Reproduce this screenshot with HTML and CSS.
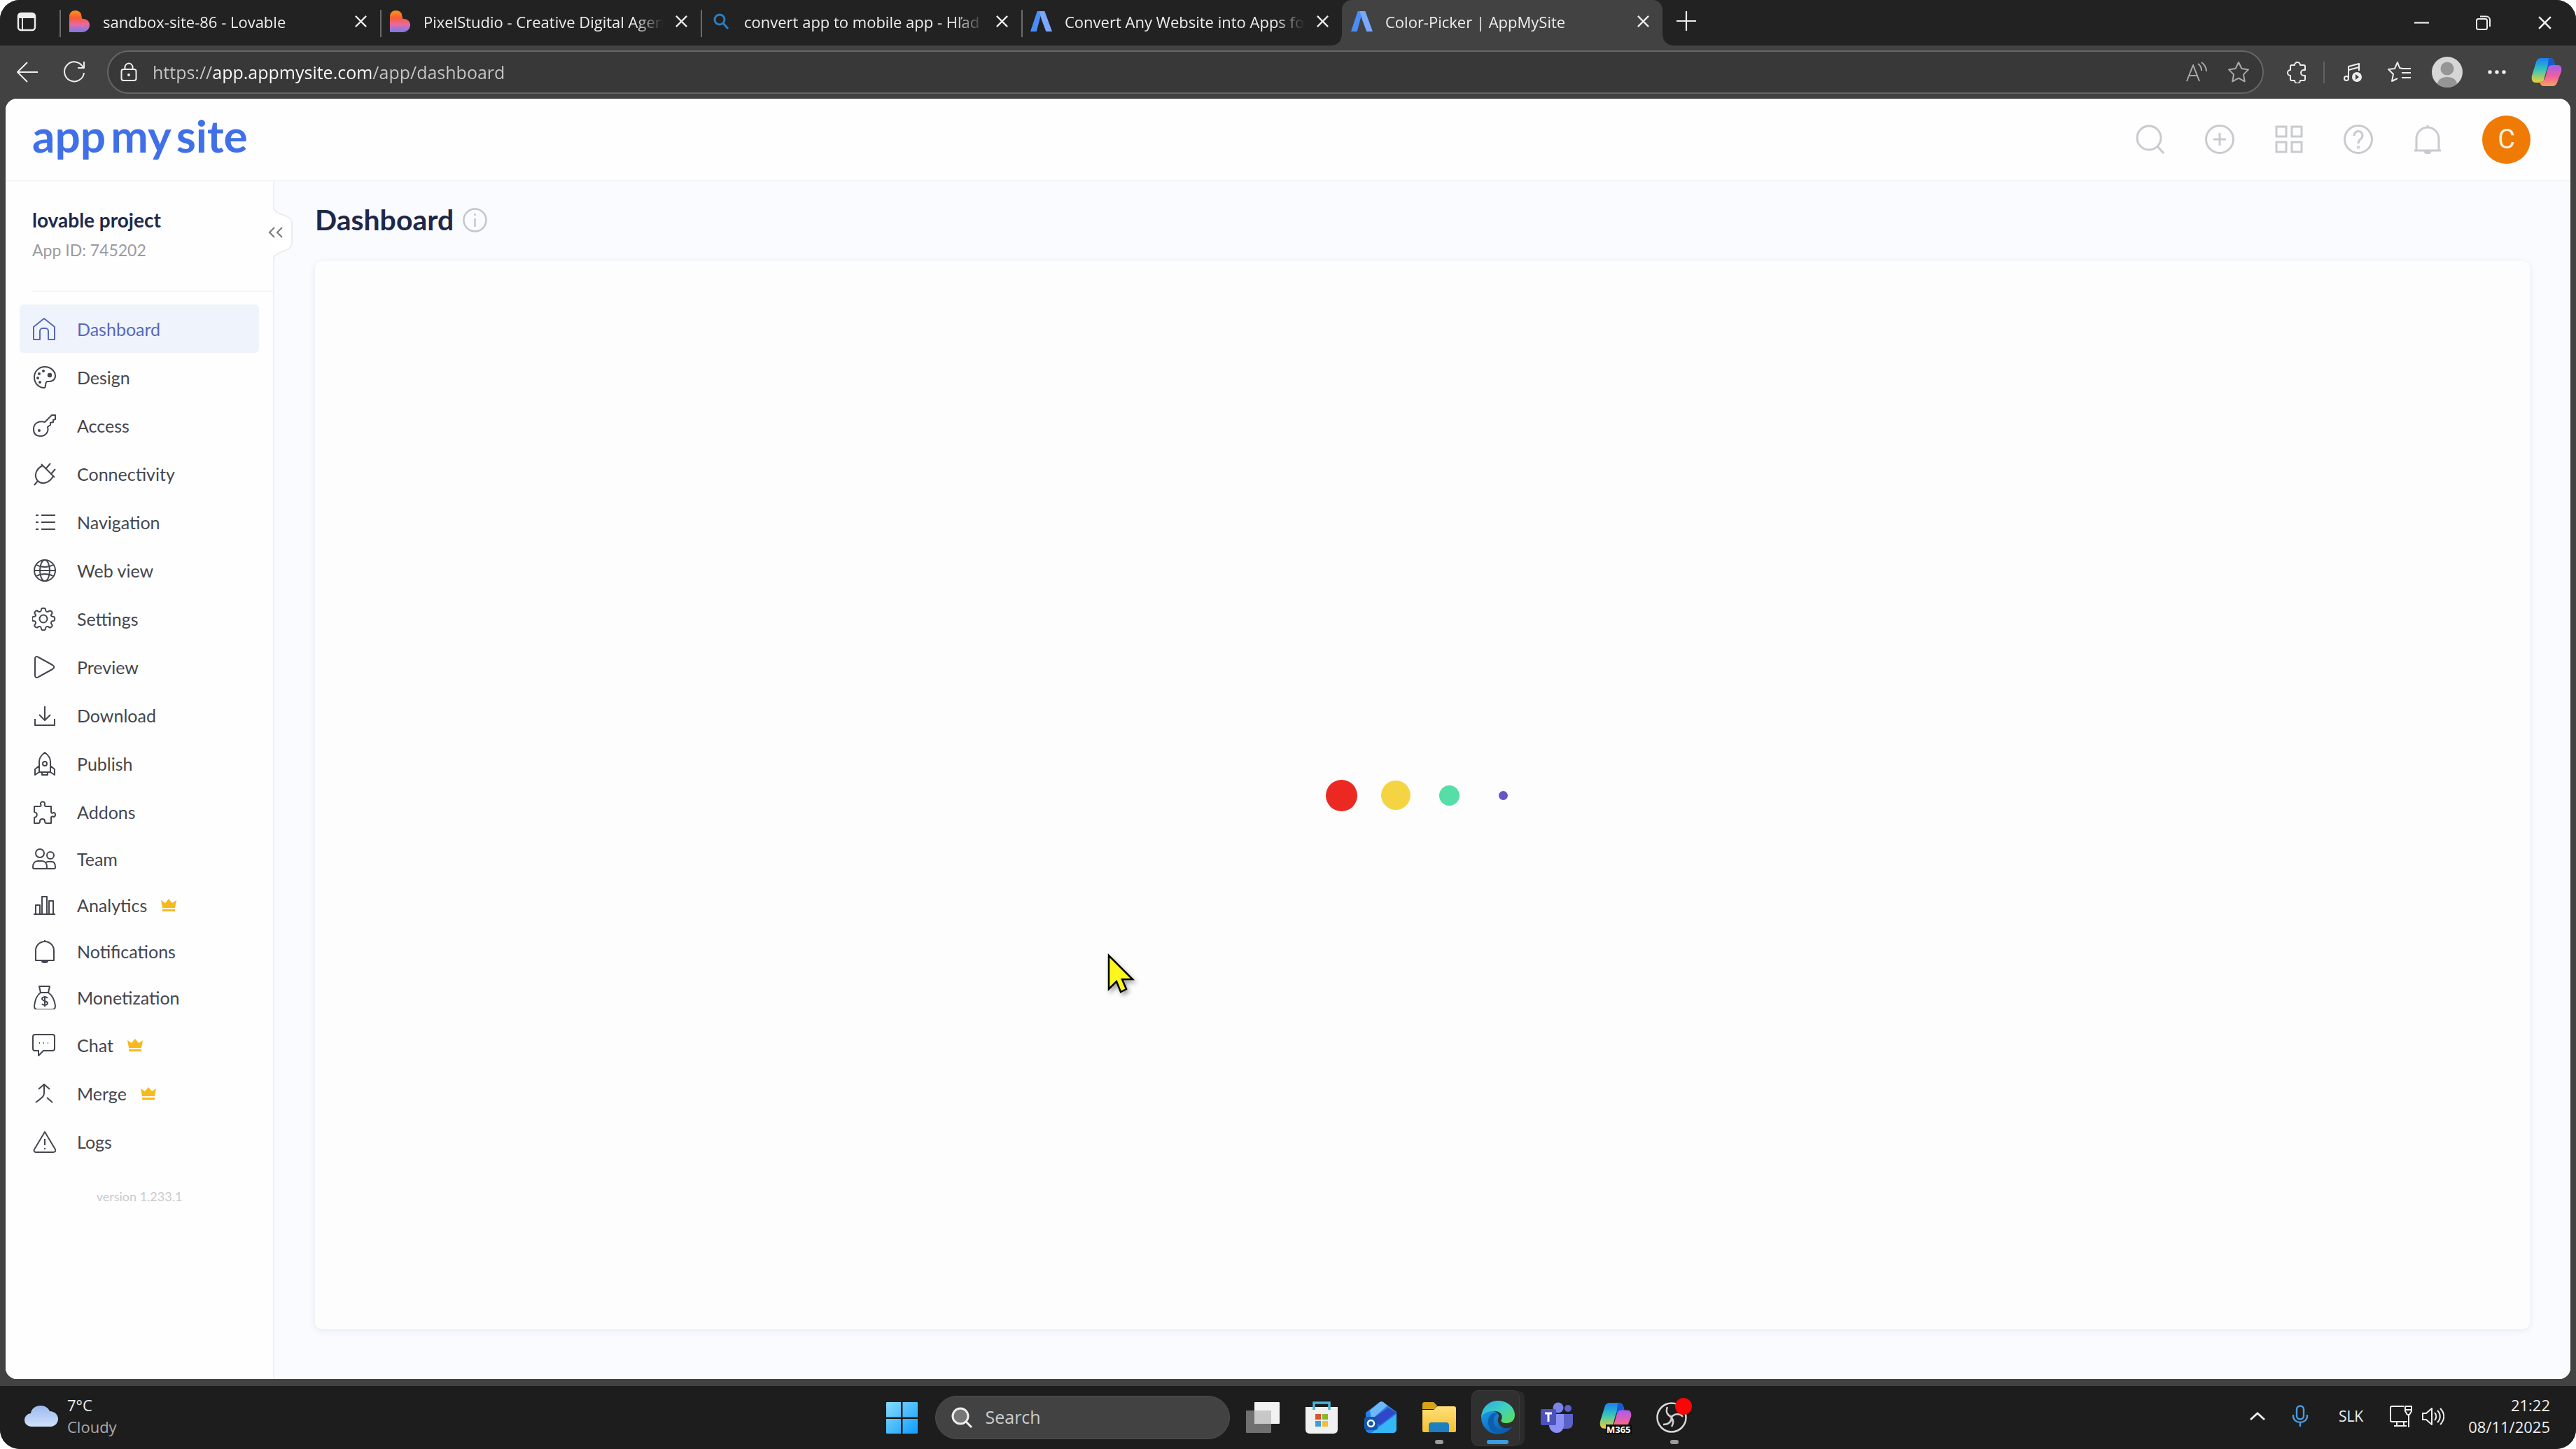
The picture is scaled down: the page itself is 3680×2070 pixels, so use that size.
FILE: index.html
```html
<!DOCTYPE html>
<html lang="en">
<head>
<meta charset="utf-8">
<title>Color-Picker | AppMySite</title>
<link rel="stylesheet" href="styles.css">
</head>
<body>
<svg class="defs" width="0" height="0" aria-hidden="true">
  <defs>
    <linearGradient id="heartFill" x1="0" y1="0" x2="0" y2="1"><stop offset="0" stop-color="#ff9417"/><stop offset=".35" stop-color="#fb5b34"/><stop offset=".65" stop-color="#e56aa5"/><stop offset="1" stop-color="#6f7df0"/></linearGradient>
    <linearGradient id="winFill" x1="0" y1="0" x2="1" y2="1"><stop offset="0" stop-color="#86dcff"/><stop offset="1" stop-color="#0f9bff"/></linearGradient>
    <linearGradient id="edgeTop" x1="0" y1="0" x2="1" y2="1"><stop offset="0" stop-color="#2aa8e6"/><stop offset=".5" stop-color="#3fd0c0"/><stop offset="1" stop-color="#5ee04c"/></linearGradient>
    <linearGradient id="edgeLow" x1="0" y1="0" x2="1" y2="1"><stop offset="0" stop-color="#1c9be8"/><stop offset="1" stop-color="#0a4f9c"/></linearGradient>
    <linearGradient id="copL" x1="0" y1="0" x2="0" y2="1"><stop offset="0" stop-color="#1c7df0"/><stop offset=".45" stop-color="#2fc3c0"/><stop offset="1" stop-color="#f2d130"/></linearGradient>
    <linearGradient id="copR" x1="0" y1="0" x2="0" y2="1"><stop offset="0" stop-color="#a85cf0"/><stop offset=".55" stop-color="#f0629c"/><stop offset="1" stop-color="#ffa05c"/></linearGradient>
    <linearGradient id="cloudFill" x1="0" y1="0" x2="0" y2="1"><stop offset="0" stop-color="#9cb9ee"/><stop offset="1" stop-color="#cfe0fc"/></linearGradient>
    <linearGradient id="folderFill" x1="0" y1="0" x2="0" y2="1"><stop offset="0" stop-color="#ffe07a"/><stop offset="1" stop-color="#f5c02e"/></linearGradient>
    <symbol id="x" viewBox="0 0 20 20"><path d="M2 2l16 16M18 2L2 18" fill="none" stroke="currentColor" stroke-width="2.4"/></symbol>
    <symbol id="heart" viewBox="0 0 32 32"><path d="M1 9C1 3 5 0 10 0c6 0 9 4 9 8l1 4c7 0 11 4 11 9 0 7-5 11-11 11H1z" fill="url(#heartFill)"/></symbol>
    <symbol id="ams" viewBox="0 0 32 32"><path d="M10 1h7l-8 30H0z" fill="#4a8df8"/><path d="M13 1h8l11 30h-9l-7-19z" fill="#7aa8ff"/></symbol>
    <symbol id="crown" viewBox="0 0 24 20"><path d="M1 3l6 4 5-6 5 6 6-4-2 11H3zM3 16h18v3H3z" fill="#f7b91c"/></symbol>
    <symbol id="copilot" viewBox="0 0 44 42"><path d="M14 1h12c5 0 6 3 7 6l1 4h-5c-4 0-6 3-7 7l-4 14c-1 3-3 4-6 4H7c-6 0-7-5-6-10L7 7c1-4 3-6 7-6z" fill="url(#copL)"/><path d="M25 1c5 0 7 3 8 7l1 4h-4c-4 0-6 1-7 5z" fill="#1659d6"/><path d="M30 41H18c-4 0-5-3-6-7 4 1 7-1 8-5l4-14c1-3 3-4 6-4h8c5 0 6 5 5 9l-6 16c-1 3-3 5-7 5z" fill="url(#copR)"/></symbol>
  </defs>
</svg>

<div class="screen">
  <div class="tabstrip">
    <button class="iconbtn tabmenu" aria-label="Tab actions"><svg viewBox="0 0 28 28" width="28" height="28"><rect x="2" y="2" width="24" height="24" rx="4" fill="none" stroke="currentColor" stroke-width="2.4"/><path d="M2 6a4 4 0 014-4h16a4 4 0 014 4v3H2z" fill="currentColor"/><path d="M8 8v18" stroke="currentColor" stroke-width="2"/></svg></button>
    <div class="tab"><svg class="favicon"><use href="#heart"/></svg><a class="tabtitle" href="#">sandbox-site-86 - Lovable</a><button class="iconbtn" aria-label="Close tab"><svg width="19" height="19"><use href="#x"/></svg></button></div>
    <div class="tab"><svg class="favicon"><use href="#heart"/></svg><a class="tabtitle" href="#">PixelStudio - Creative Digital Agen</a><button class="iconbtn" aria-label="Close tab"><svg width="19" height="19"><use href="#x"/></svg></button></div>
    <div class="tab"><svg class="favicon" viewBox="0 0 31 31"><circle cx="14" cy="13" r="7" fill="none" stroke="#2a7fc0" stroke-width="3"/><path d="M19 18l7 8" stroke="#2a7fc0" stroke-width="3"/></svg><a class="tabtitle" href="#">convert app to mobile app - Hľad</a><button class="iconbtn" aria-label="Close tab"><svg width="19" height="19"><use href="#x"/></svg></button></div>
    <div class="tab"><svg class="favicon"><use href="#ams"/></svg><a class="tabtitle" href="#">Convert Any Website into Apps fo</a><button class="iconbtn" aria-label="Close tab"><svg width="19" height="19"><use href="#x"/></svg></button></div>
    <div class="tab active"><svg class="favicon"><use href="#ams"/></svg><a class="tabtitle" href="#">Color-Picker | AppMySite</a><button class="iconbtn" aria-label="Close tab"><svg width="19" height="19"><use href="#x"/></svg></button></div>
    <button class="iconbtn newtab" aria-label="New tab"><svg width="28" height="28" viewBox="0 0 28 28"><path d="M14 0v28M0 14h28" stroke="currentColor" stroke-width="2.2"/></svg></button>
    <div class="winctl">
      <button class="iconbtn" aria-label="Minimize"><svg width="21" height="21" viewBox="0 0 21 21"><path d="M0 10.500h21" stroke="currentColor" stroke-width="2.2"/></svg></button>
      <button class="iconbtn" aria-label="Restore"><svg width="21" height="21" viewBox="0 0 21 21"><rect x="1" y="5" width="15" height="15" rx="2.500" fill="none" stroke="currentColor" stroke-width="2"/><path d="M6 1.500h9a5 5 0 015 5V16" fill="none" stroke="currentColor" stroke-width="2"/></svg></button>
      <button class="iconbtn" aria-label="Close"><svg width="21" height="21"><use href="#x"/></svg></button>
    </div>
  </div>

  <div class="toolbar">
    <button class="iconbtn" aria-label="Back"><svg width="32" height="32" viewBox="0 0 32 32" class="line"><path d="M31 16H2M16 2L2 16l14 14"/></svg></button>
    <button class="iconbtn" aria-label="Reload"><svg width="32" height="32" viewBox="0 0 32 32" class="line"><path d="M29 10A14 14 0 1030 17M30 1v9h-9"/></svg></button>
    <div class="omnibox">
      <svg width="24" height="28" viewBox="0 0 24 28" class="line"><rect x="1.500" y="10" width="21" height="16" rx="3"/><path d="M6.500 10V7a5.500 5.500 0 0111 0v3"/><circle cx="12" cy="18" r="1"/></svg>
      <input class="url" type="text" aria-label="Address" value="https://app.appmysite.com/app/dashboard">
      <button class="iconbtn dim" aria-label="Read aloud"><svg width="32" height="32" viewBox="0 0 32 32" class="line"><path d="M2 29L11 6l9 23M5 21h12M18 4c3 2 5 6 5 10M23 2c4 3 7 7 7 13"/></svg></button>
      <button class="iconbtn dim" aria-label="Favourite"><svg width="32" height="32" viewBox="0 0 32 32" class="line"><path d="M16 2l4.400 9 9.600 1.400-7 7 1.700 10L16 24.700l-8.700 4.700 1.700-10-7-7 9.600-1.400z"/></svg></button>
    </div>
    <button class="iconbtn" aria-label="Extensions"><svg width="32" height="32" viewBox="0 0 32 32" class="line"><path d="M9 6h4a4 4 0 018 0h5a2 2 0 012 2v5h-2a4 4 0 000 8h2v5a2 2 0 01-2 2h-5a4 4 0 01-8 0H9a2 2 0 01-2-2v-5a4 4 0 010-8V8a2 2 0 012-2z"/></svg></button>
    <span class="vline"></span>
    <button class="iconbtn" aria-label="Media"><svg width="28" height="28" viewBox="0 0 28 28" class="line"><circle cx="4" cy="23" r="3"/><path d="M7 23V6l15-4v10M7 11l15-4"/><circle cx="19" cy="21" r="7" fill="currentColor" stroke="none"/><path d="M17 17l5 4-5 4z" fill="#424242" stroke="none"/></svg></button>
    <button class="iconbtn" aria-label="Favourites"><svg width="34" height="32" viewBox="0 0 34 32" class="line"><path d="M21 11l-4-1-3-8-4 9-9 1 7 7-2 10 8-4M21 11h12M20 17h13M20 24h13"/></svg></button>
    <button class="iconbtn profile" aria-label="Profile"><svg width="44" height="44" viewBox="0 0 44 44"><circle cx="22" cy="22" r="22" fill="#d6d6d6"/><circle cx="22" cy="17" r="9.500" fill="#959595"/><path d="M8 39c1-7 7-10 14-10s13 3 14 10a22 22 0 01-28 0z" fill="#959595"/></svg></button>
    <button class="iconbtn" aria-label="Menu"><svg width="28" height="8" viewBox="0 0 28 8" fill="currentColor"><circle cx="4" cy="4" r="2.700"/><circle cx="14" cy="4" r="2.700"/><circle cx="24" cy="4" r="2.700"/></svg></button>
    <button class="iconbtn" aria-label="Copilot"><svg width="44" height="42"><use href="#copilot"/></svg></button>
  </div>

  <div class="viewport">
    <div class="page">
      <header class="apphead">
        <a class="logo" href="#"><span>app</span><span>my</span><span>site</span></a>
        <div class="headicons">
          <button class="iconbtn" aria-label="Search"><svg width="42" height="42" viewBox="0 0 42 42" class="line"><circle cx="19" cy="19" r="17"/><path d="M31 31l9 10"/></svg></button>
          <button class="iconbtn" aria-label="Add"><svg width="42" height="42" viewBox="0 0 42 42" class="line"><circle cx="21" cy="21" r="19.500"/><path d="M21 12v18M12 21h18"/></svg></button>
          <button class="iconbtn" aria-label="Apps"><svg width="42" height="42" viewBox="0 0 42 42" class="line"><path d="M3 3h14v14H3zM25 3h14v14H25zM3 25h14v14H3zM25 25h14v14H25z"/></svg></button>
          <button class="iconbtn" aria-label="Help"><svg width="42" height="42" viewBox="0 0 42 42" class="line"><circle cx="21" cy="21" r="19.500"/><path d="M15 16a6 6 0 1110 4c-2 2-4 3-4 7"/><circle cx="21" cy="32.500" r=".8"/></svg></button>
          <button class="iconbtn" aria-label="Notifications"><svg width="42" height="42" viewBox="0 0 42 42" class="line"><path d="M21 1v3M2 37h38M5 37V20a16 16 0 0132 0v17"/><path d="M17 38a4 3 0 008 0z" fill="currentColor"/></svg></button>
          <button class="avatar" aria-label="Account">C</button>
        </div>
      </header>
      <div class="appbody">
        <aside class="sidebar">
          <button class="collapse" aria-label="Collapse sidebar"><svg width="28" height="76" viewBox="0 0 28 76"><path d="M0 0C2 14 27 10 27 24v28c0 14-25 10-27 24" fill="#fff" stroke="#ececef" stroke-width="2"/></svg><svg class="chev" width="22" height="16" viewBox="0 0 22 16"><path d="M9 1L2 8l7 7M20 1l-7 7 7 7" fill="none" stroke="#777" stroke-width="2"/></svg></button>
          <div class="project">
            <strong class="pname">lovable project</strong>
            <span class="pid">App ID: 745202</span>
          </div>
          <nav class="nav">
            <a class="item on" href="#"><svg viewBox="0 0 34 34"><path d="M2 32V14L17 2l15 12v18h-9V20a4 4 0 00-4-4h-4a4 4 0 00-4 4v12z"/></svg>Dashboard</a>
            <a class="item" href="#"><svg viewBox="0 0 34 34"><path d="M17 32C9 32 3 25 3 17 3 8 10 2 18 2s15 6 15 13c0 5-4 8-9 8h-2c-5 0-1 9-5 9z"/><circle cx="25" cy="14" r="2.200" fill="currentColor"/><circle cx="16" cy="8" r="1"/><circle cx="10" cy="12" r="1"/><circle cx="8" cy="18" r="1"/><circle cx="11" cy="24" r="1"/></svg>Design</a>
            <a class="item" href="#"><svg viewBox="0 0 34 34"><path d="M18 12L28 2h5v6l-3 1v3l-4 1v3l-4 3c2 7-3 13-10 13S2 28 2 22c0-7 6-13 16-10z"/><circle cx="10" cy="24" r="1"/></svg>Access</a>
            <a class="item" href="#"><svg viewBox="0 0 34 34"><path d="M3 33l5-6M8 27C2 20 5 10 15 5l15 15c-5 10-16 13-22 7zM13 3l19 19M20 9l6-7M27 17l6-7"/></svg>Connectivity</a>
            <a class="item" href="#"><svg viewBox="0 0 34 34"><path d="M5 7h4M13 7h20M5 17h4M13 17h20M5 27h4M13 27h20"/></svg>Navigation</a>
            <a class="item" href="#"><svg viewBox="0 0 34 34"><circle cx="18" cy="17" r="15"/><ellipse cx="18" cy="17" rx="7" ry="15"/><path d="M3 17h30M6 9c7 4 17 4 24 0M6 25c7-4 17-4 24 0"/></svg>Web view</a>
            <a class="item" href="#"><svg viewBox="0 0 34 34"><circle cx="16" cy="17" r="5.500"/><path d="M13 4c0-3 6-3 6 0 0 3 3 4 5 2s6 2 4 4-1 4 2 4 3 6 0 6-4 3-2 5-2 6-4 4-5-1-5 2-6 3-6 0-3-4-5-2-6-2-4-4 1-5-2-5-3-6 0-6 4-2 2-4 2-6 4-4 5 1 5-2z"/></svg>Settings</a>
            <a class="item" href="#"><svg viewBox="0 0 34 34"><path d="M4 5c0-3 2-4 5-2l20 11c3 2 3 4 0 6L9 31c-3 2-5 1-5-2z"/></svg>Preview</a>
            <a class="item" href="#"><svg viewBox="0 0 34 34"><path d="M18 4v20M10 16l8 8 8-8M4 22v9h28v-9"/></svg>Download</a>
            <a class="item" href="#"><svg viewBox="0 0 34 34"><path d="M10 29V14c0-6 4-10 8-13 4 3 8 7 8 13v15zM10 20l-6 5v8l6-4M26 20l6 5v8l-6-4M14 29v4h8v-4"/><circle cx="18" cy="17" r="3"/></svg>Publish</a>
            <a class="item" href="#"><svg viewBox="0 0 34 34"><path d="M3 9h8c2 0 2-2 1-3-1-5 7-5 6 0-1 1 0 3 2 3h7v8c0 2 2 2 3 1 4-1 4 6 0 6-1-1-3-1-3 1v8h-7c-2 0-2-2-2-3 0-4-7-4-7 0 0 1 0 3-2 3H3v-8c5-1 5-7 0-8z"/></svg>Addons</a>
            <a class="item low" href="#"><svg viewBox="0 0 34 34"><circle cx="11" cy="9" r="6"/><circle cx="26" cy="12" r="5"/><path d="M1 29c0-6 3-9 7-9h6c4 0 7 3 7 9 0 1-1 2-2 2H3c-1 0-2-1-2-2zM20 22c1-1 2-1 3-1h5c3 0 5 3 5 8 0 1-1 2-2 2H19"/></svg>Team</a>
            <a class="item low" href="#"><svg viewBox="0 0 34 34"><path d="M2 30h31M5 30V17h6v13M14 30V5h7v25M24 30V11h6v19"/></svg>Analytics<svg class="crown"><use href="#crown"/></svg></a>
            <a class="item low" href="#"><svg viewBox="0 0 34 34"><path d="M5 30V16a13 13 0 0126 0v14zM18 1v2M14 31a4 2 0 008 0z"/></svg>Notifications</a>
            <a class="item low" href="#"><svg viewBox="0 0 34 34"><path d="M12 10L10 1h15l-2 9zM12 10C6 14 4 21 3 29c0 3 1 5 4 5h22c3 0 4-2 4-5-1-8-4-15-10-19"/><path d="M22 18c-2-3-8-2-8 1s8 3 8 6-6 4-8 1M18 15v15"/></svg>Monetization</a>
            <a class="item" href="#"><svg viewBox="0 0 34 34"><path d="M4 2h25c2 0 3 1 3 3v17c0 2-1 3-3 3H16l-7 7v-7H4c-2 0-3-1-3-3V5c0-2 1-3 3-3z"/><path d="M10 14h1M16 14h1M22 14h1"/></svg>Chat<svg class="crown"><use href="#crown"/></svg></a>
            <a class="item" href="#"><svg viewBox="0 0 34 34"><path d="M9 11l8-7 8 7M17 4v13c0 4-3 6-12 13M21 23l8 7"/></svg>Merge<svg class="crown"><use href="#crown"/></svg></a>
            <a class="item" href="#"><svg viewBox="0 0 34 34"><path d="M18 3L3 28c-1 2 0 4 2 4h25c3 0 4-2 3-4L18 3zM18 13v9M18 26v2"/></svg>Logs</a>
          </nav>
          <p class="version">version 1.233.1</p>
        </aside>
        <main class="main">
          <h1 class="title">Dashboard <svg width="35" height="35" viewBox="0 0 35 35" fill="none" stroke="#c4c4c8" stroke-width="2.400"><circle cx="17.500" cy="17.500" r="16"/><path d="M17.500 15v12M17.500 8v3"/></svg></h1>
          <section class="card" aria-label="Loading">
            <div class="loader"><span><i class="dot red"></i></span><span><i class="dot yellow"></i></span><span><i class="dot green"></i></span><span><i class="dot purple"></i></span></div>
          </section>
        </main>
      </div>
    </div>
  </div>

  <footer class="taskbar">
    <div class="weather">
      <svg width="48" height="32" viewBox="0 0 48 32"><path d="M10 31a9 9 0 01-1-19C10 5 16 1 23 1c6 0 11 3 13 8 7 0 12 5 12 11s-5 11-11 11z" fill="url(#cloudFill)"/></svg>
      <div class="wtext"><span>7°C</span><span class="wsub">Cloudy</span></div>
    </div>
    <div class="dock">
      <button class="slot" aria-label="Start"><svg width="45" height="45" viewBox="0 0 45 45" fill="url(#winFill)"><path d="M0 1a1 1 0 011-1h20v21.500H0zM23.500 0H44a1 1 0 011 1v20.500H23.500zM0 24h21v21H1a1 1 0 01-1-1zM23.500 24H45v20a1 1 0 01-1 1H23.500z"/></svg></button>
      <label class="search"><svg width="30" height="30" viewBox="0 0 30 30" fill="#777" stroke="#eee" stroke-width="3"><circle cx="13" cy="13" r="11"/><path d="M21 21l8 8"/></svg><input type="text" placeholder="Search" aria-label="Search"></label>
      <button class="slot" aria-label="Task view"><svg width="48" height="44" viewBox="0 0 48 44"><rect x="12" y="0" width="36" height="31" rx="1" fill="#f2f2f2"/><rect x="0" y="12" width="36" height="32" rx="1" fill="#707070"/><path d="M12 12h24v19H12z" fill="#c8c8c8"/></svg></button>
      <button class="slot" aria-label="Store"><svg width="46" height="46" viewBox="0 0 46 46"><path d="M0 8h46v31c0 5-2 7-7 7H7c-5 0-7-2-7-7z" fill="#f0f0f0"/><path d="M12 12V2h22v10" fill="none" stroke="#4bb4dc" stroke-width="3.500"/><path d="M14 18h8v8h-8z" fill="#e0512f"/><path d="M24 18h8v8h-8z" fill="#88b92a"/><path d="M14 28h8v8h-8z" fill="#3aa0d8"/><path d="M24 28h8v8h-8z" fill="#f5bd36"/></svg></button>
      <button class="slot" aria-label="Outlook"><svg width="46" height="46" viewBox="0 0 46 46"><path d="M2 16L22 1c2-1 3-1 5 0l19 14v24c0 4-2 6-6 6H8c-4 0-6-2-6-6z" fill="#2a7ee6"/><path d="M8 13L22 1c2-1 3-1 5 0l6 5L10 26z" fill="#6cb8fa"/><path d="M34 9l12 7L22 34l-12-8z" fill="#3048c8"/><path d="M46 18v21c0 4-2 6-6 6H10z" fill="#35b6f7"/><rect y="22" width="19" height="19" rx="4" fill="#1358ae"/><circle cx="9.500" cy="31.500" r="4.500" fill="none" stroke="#fff" stroke-width="2.500"/></svg></button>
      <button class="slot run" aria-label="File Explorer"><svg width="48" height="44" viewBox="0 0 48 44"><path d="M0 3a3 3 0 013-3h13l5 5-4 5H0z" fill="#d9a316"/><path d="M0 11h16l5-5h24a3 3 0 013 3v32a2 2 0 01-2 2H2a2 2 0 01-2-2z" fill="url(#folderFill)"/><path d="M9 43V33a4 4 0 014-4h21a4 4 0 014 4v10z" fill="#1d7fbf"/></svg></button>
      <button class="slot run current" aria-label="Edge"><svg width="48" height="48" viewBox="0 0 48 48"><path d="M0 24a24 24 0 0044 13c-10 6-21 0-20-11 1-3 2-4 1-6C18 10 3 13 0 24z" fill="url(#edgeLow)"/><path d="M0 24C1 9 11 0 24 0c14 0 24 10 24 20 0 9-6 12-12 12-5 0-9-2-7-5 3-8-4-13-12-12C8 15 2 19 0 24z" fill="url(#edgeTop)"/><path d="M10 30c0-8 6-14 14-12-6 2-9 13-3 20 6 6 16 5 23-1-8 13-34 14-34-7z" fill="#0d5db0"/></svg></button>
      <button class="slot" aria-label="Teams"><svg width="46" height="44" viewBox="0 0 46 44"><circle cx="25" cy="8" r="7.500" fill="#7b83eb"/><circle cx="39" cy="9" r="5" fill="#5b62c8"/><path d="M32 17h14v13c0 5-3 8-8 8h-6z" fill="#5b62c8"/><path d="M12 17h21v16c0 6-4 11-10 11s-11-5-11-11z" fill="#8b91f2"/><rect y="10" width="22" height="23" rx="2" fill="#4b53bc"/><path d="M6 16h10M11 16v12" stroke="#fff" stroke-width="3"/></svg></button>
      <button class="slot" aria-label="Microsoft 365 Copilot"><span class="m365"><svg width="46" height="44"><use href="#copilot"/></svg><span class="m365tag">M365</span></span></button>
      <button class="slot run" aria-label="OBS Studio"><svg width="52" height="56" viewBox="4 0 52 56"><circle cx="26" cy="28" r="20.500" fill="#1c1c1c" stroke="#d8d8d8" stroke-width="2.500"/><path d="M26 27c-6-2-9-7-6-14M26 27c5-5 12-5 16 0M26 27c0 7-4 11-12 11M26 27l-3 0M26 28c3 4 3 8 0 13" fill="none" stroke="#d0d0d0" stroke-width="2.500"/><circle cx="43" cy="12" r="12" fill="#fa0606"/></svg></button>
    </div>
    <div class="tray">
      <button class="iconbtn caret" aria-label="Hidden icons"><svg width="22" height="12" viewBox="0 0 22 12"><path d="M1 11L11 2l10 9" fill="none" stroke="currentColor" stroke-width="2.800"/></svg></button>
      <svg class="mic" width="24" height="32" viewBox="0 0 24 32" fill="none" stroke="#4a9be0" stroke-width="2.400"><rect x="7" y="1.500" width="10" height="19" rx="5"/><path d="M2 14v2a10 9 0 0020 0v-2M12 25v6"/></svg>
      <button class="iconbtn lang">SLK</button>
      <svg width="32" height="32" viewBox="0 0 32 32" class="line"><path d="M20 2H3a2 2 0 00-2 2v18a2 2 0 002 2h22M10 24v6M20 24v6M6 30h18M22 2h9v7l-3 5h-3l-3-5zM22 7h9M27 14v18"/></svg>
      <svg class="speaker line" width="32" height="32" viewBox="0 0 32 32"><path d="M1 12h5l8-7v23l-8-7H1zM18 11c3 3 3 8 0 11M22 8c5 5 5 12 0 17M26 5c7 7 7 16 0 23"/></svg>
      <div class="clock"><time>21:22</time><time>08/11/2025</time></div>
    </div>
  </footer>
</div>

<svg class="cursor" width="44" height="60" viewBox="0 0 44 60"><path d="M2 3v48l11-11 6 15 8-4-6-14h15z" fill="#fdf61c" stroke="#000" stroke-width="2.500"/></svg>
</body>
</html>
```
FILE: styles.css
```css
* { box-sizing: border-box; }
html, body { margin: 0; }
body { background: #fff; font-family: "Open Sans", "Noto Sans", sans-serif; font-size: 22px; color: #eee; }
.defs { position: absolute; }
.screen { display: flex; flex-direction: column; min-height: 100vh; border-radius: 28px; overflow: hidden; background: #424242; }
button, input { font: inherit; color: inherit; }
svg { flex: none; display: block; }
.iconbtn { display: flex; align-items: center; justify-content: center; padding: 0; border: 0; background: none; flex: none; }
.line { fill: none; stroke: currentColor; stroke-width: 2; stroke-linejoin: round; }

/* tab strip */
.tabstrip { display: flex; height: 65px; background: #222; }
.tabmenu { margin: 0 33px 4px 24px; }
.tab { position: relative; flex: 0 1 458px; display: flex; align-items: center; padding: 1px 18px 5px 13px; min-width: 0; }
.tab::before { content: ""; position: absolute; left: 0; top: 14px; width: 2px; height: 39px; background: #6b6b6b; }
.favicon { width: 31px; height: 31px; margin-right: 18px; }
.tabtitle { flex: 1; overflow: hidden; white-space: nowrap; color: #eee; text-decoration: none; margin-right: 12px; line-height: 32px; -webkit-mask-image: linear-gradient(90deg, #000 calc(100% - 46px), transparent calc(100% - 4px)); mask-image: linear-gradient(90deg, #000 calc(100% - 46px), transparent calc(100% - 4px)); }
.tab.active { background: #424242; border-radius: 14px 14px 0 0; }
.tab.active::before { left: -14px; top: auto; bottom: 0; width: 14px; height: 14px; background: radial-gradient(circle at 0 0, transparent 13px, #424242 14px); }
.tab.active::after { content: ""; position: absolute; right: -14px; bottom: 0; width: 14px; height: 14px; background: radial-gradient(circle at 100% 0, transparent 13px, #424242 14px); }
.newtab { margin: 0 20px 5px; }
.winctl { display: flex; align-items: center; gap: 67px; margin-left: auto; padding-right: 34px; }

/* address bar */
.toolbar { display: flex; align-items: center; height: 76px; padding: 0 20px 0 23px; }
.toolbar > .iconbtn + .iconbtn { margin-left: 35px; }
.toolbar > .iconbtn + .profile { margin-left: 29px; }
.omnibox { flex: 1; display: flex; align-items: center; height: 62px; margin: 0 31px; padding: 0 18px 0 17px; border: 2px solid #666; border-radius: 31px; background: #383838; }
.url { flex: 1; min-width: 0; height: 50px; margin-left: 22px; padding: 0; border: 0; font-size: 25px; background: linear-gradient(90deg, #c8c8c8 84px, #fff 84px 312px, #c8c8c8 312px); -webkit-background-clip: text; background-clip: text; color: transparent; }
.dim { color: #aaa; margin-left: 28px; }
.vline { width: 2px; height: 31px; margin: 0 27px 0 22px; background: #606060; }

/* app page */
.viewport { flex: 1; display: flex; padding: 0 8px 10px; }
.page { flex: 1; display: flex; flex-direction: column; background: #fdfdfe; border-radius: 16px; overflow: hidden; font-family: Lato, "Open Sans", sans-serif; color: #3c3f48; }
.apphead { display: flex; align-items: center; justify-content: space-between; height: 118px; padding: 0 57px 0 38px; border-bottom: 2px solid #f2f4f7; background: #fefefe; }
.logo { display: flex; gap: 7px; padding-bottom: 10px; color: #4070e8; font-size: 64px; font-weight: 700; line-height: 76px; text-decoration: none; }
.headicons { display: flex; align-items: center; gap: 57px; color: #c9cacf; }
.headicons .line { stroke-width: 3; stroke-linejoin: miter; }
.avatar { width: 69px; height: 69px; padding: 0; border: 0; border-radius: 50%; background: #ef7a04; color: #fdf0dc; font-family: Roboto, sans-serif; font-size: 38px; }
.appbody { flex: 1; display: flex; }
.sidebar { position: relative; flex: 0 0 384px; padding: 39px 0 0; border-right: 2px solid #efeff2; background: #fefefe; }
.collapse { position: absolute; right: -28px; top: 36px; width: 36px; height: 76px; padding: 0 0 0 8px; border: 0; background: none; }
.chev { position: absolute; left: 1px; top: 29px; }
.project { display: flex; flex-direction: column; gap: 12px; margin-left: 38px; padding-bottom: 43px; border-bottom: 2px solid #f3f3f5; }
.pname { font-size: 28px; line-height: 32px; color: #20294a; }
.pid { font-size: 23px; line-height: 30px; color: #9a9a9e; }
.nav { display: flex; flex-direction: column; margin: 18px 20px 0; }
.item { display: flex; align-items: center; height: 69px; padding-left: 18px; border-radius: 6px; font-size: 25px; color: #44464e; text-decoration: none; }
.item.low { height: 66px; }
.item svg { width: 34px; height: 34px; margin-right: 30px; fill: none; stroke: currentColor; stroke-width: 2; stroke-linejoin: round; }
.item .crown { width: 24px; height: 20px; margin: 0 0 0 19px; stroke: none; }
.item.on { background: #eff3fc; color: #5568bd; }
.version { margin: 30px 0 0; text-align: center; font-size: 18px; line-height: 28px; color: #c9c9ce; }
.main { flex: 1; display: flex; flex-direction: column; padding: 30px 58px 71px; background: #fafbff; }
.title { display: flex; align-items: center; gap: 13px; margin: 0 0 34px; font-size: 41px; line-height: 50px; font-weight: 700; color: #1e2848; }
.card { flex: 1; display: flex; align-items: center; justify-content: center; border-radius: 10px; background: #fdfdfd; box-shadow: 0 2px 10px rgba(60, 70, 110, .1); }
.loader { display: flex; }
.loader span { display: flex; align-items: center; justify-content: center; width: 77px; height: 46px; }
.dot { border-radius: 50%; }
.red { width: 45px; height: 45px; background: #ec2822; }
.yellow { width: 42px; height: 42px; background: #f5d443; }
.green { width: 29px; height: 29px; background: #57dda6; }
.purple { width: 13px; height: 13px; background: #6455c8; }

/* taskbar */
.taskbar { display: grid; grid-template-columns: 1fr auto 1fr; align-items: center; height: 90px; background: #1d1d1d; }
.weather { display: flex; align-items: center; gap: 13px; padding: 0 0 4px 35px; }
.wtext, .clock { display: flex; flex-direction: column; line-height: 31px; }
.wsub { color: #aaa; }
.dock { display: flex; align-items: center; height: 90px; }
.slot { position: relative; display: flex; align-items: center; justify-content: center; width: 84px; height: 78px; padding: 0; border: 0; background: none; }
.slot.run::after { content: ""; position: absolute; bottom: 1px; left: 36px; width: 12px; height: 6px; border-radius: 3px; background: #9a9a9a; }
.slot.current::before { content: ""; position: absolute; left: 4px; top: 0; width: 67px; height: 78px; border-radius: 10px; background: #303030; border: 1px solid #3c3c3c; box-shadow: 8px 0 0 -1px #2b2b2b; }
.slot.current svg { position: relative; }
.slot.current::after { left: 26px; width: 31px; background: #3a9be0; }
.search { display: flex; align-items: center; gap: 19px; width: 421px; height: 62px; margin: 0 5px; padding: 0 22px; border-radius: 31px; border: 1px solid #4e4e4e; background: #424242; }
.search input { min-width: 0; flex: 1; padding: 0 0 2px; border: 0; background: none; font-size: 25px; }
.search input::placeholder { color: #ccc; opacity: 1; }
.m365 { position: relative; display: block; }
.m365tag { position: absolute; right: 0; bottom: -2px; padding: 0 1px; background: #0c0c0c; color: #fff; font-size: 13px; font-weight: 700; line-height: 14px; }
.tray { display: flex; align-items: center; justify-content: flex-end; padding: 0 37px 4px 0; }
.mic { margin: 0 43px 0 38px; }
.lang { margin-right: 38px; font-size: 21px; }
.speaker { margin: 0 34px 0 14px; }
.clock { align-items: flex-end; }

.cursor { position: absolute; left: 43%; top: 1362px; filter: drop-shadow(3px 4px 3px rgba(0, 0, 0, .35)); }
```
